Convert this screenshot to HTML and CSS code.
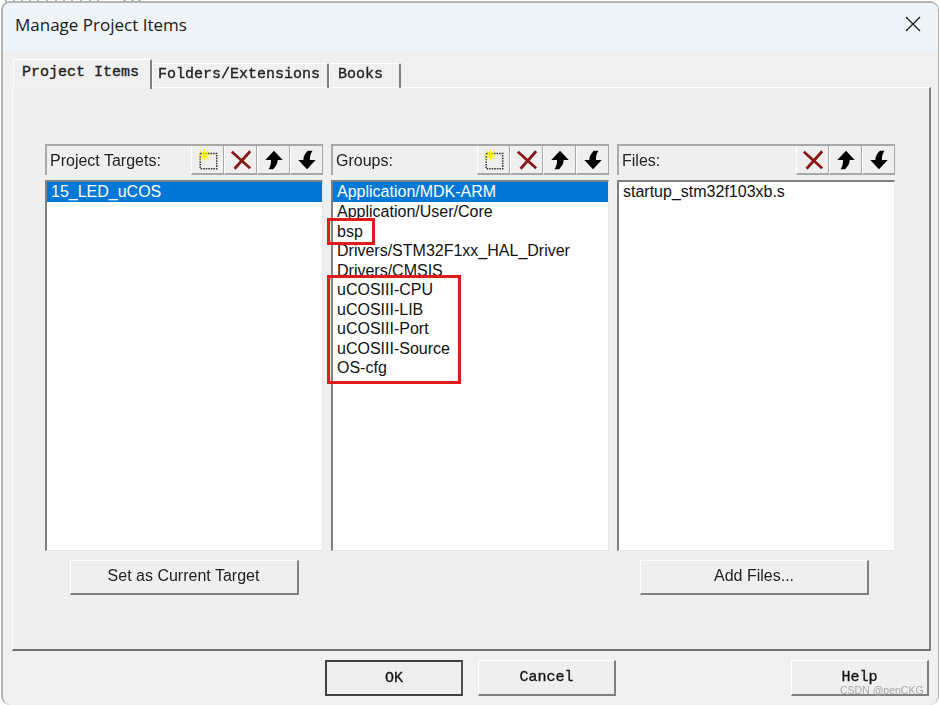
FILE: index.html
```html
<!doctype html>
<html lang="en">
	<head>
		<meta charset="UTF-8" />
		<meta name="viewport" content="width=device-width, initial-scale=1.0" />
		<title>Manage Project Items</title>
		<link rel="stylesheet" href="styles.css">
	</head>

	<body>
		<svg class="icon-defs" width="0" height="0">
			<symbol id="icon-new" viewBox="0 0 24 24">
				<rect x="3.500" y="5" width="18" height="16.500" fill="none" stroke="#333" stroke-width="1.600" stroke-dasharray="1.700 1.100" />
				<path d="M1.500 6.500H14M8 0V12.500M3.500 2L12.500 11M12.500 2L3.500 11" fill="none" stroke="#f7f300" stroke-width="1.300" />
			</symbol>
			<symbol id="icon-delete" viewBox="0 0 24 24">
				<path d="M2 3l20 18M22 2.500L5 21.500" fill="none" stroke="#8b1616" stroke-width="3" />
			</symbol>
			<symbol id="icon-up" viewBox="0 0 24 24">
				<path d="M12 2l9.500 10H16c0 4-2 7-5 10H6c2-2.500 2.800-6 2.800-10H2.500z" fill="#000" />
			</symbol>
			<symbol id="icon-down" viewBox="0 0 24 24">
				<path d="M12 22L2.500 12H8c0-4 2-7 5-10h5c-2 2.500-2.800 6-2.800 10h6.300z" fill="#000" />
			</symbol>
		</svg>

		<svg class="backdrop-marks" viewBox="0 0 160 4">
			<path d="M6 0v3M14 0v3M22 0v2M30 0v3M38 0v2M47 0v3M56 0v2M64 0v3M72 0v2M81 0v3M90 0v2M98 0v3M124 0l3 3M132 0l3 3M140 0l-3 3" fill="none" stroke="#6f9a4a" stroke-width="1.200" />
		</svg>

		<div class="window">
			<div class="titlebar">
				<span class="title">Manage Project Items</span>
				<svg class="close-icon" viewBox="0 0 16 16">
					<path d="M1 1l14 14M15 1L1 15" fill="none" stroke="#1a1a1a" stroke-width="1.300" />
				</svg>
			</div>

			<div class="dialog-body">
				<div class="tabs">
					<div class="tab active">Project Items</div>
					<div class="tab">Folders/Extensions</div>
					<div class="tab tab-books">Books</div>
				</div>

				<div class="tab-panel">
					<div class="columns">
						<div class="pane">
							<div class="pane-header">
								<span class="pane-label">Project Targets:</span>
								<div class="tool-btn"><svg><use href="#icon-new" /></svg></div>
								<div class="tool-btn"><svg><use href="#icon-delete" /></svg></div>
								<div class="tool-btn"><svg><use href="#icon-up" /></svg></div>
								<div class="tool-btn"><svg><use href="#icon-down" /></svg></div>
							</div>
							<div class="list">
								<div class="row selected">15_LED_uCOS</div>
							</div>
							<div class="pane-action">
								<div class="btn">Set as Current Target</div>
							</div>
						</div>

						<div class="pane">
							<div class="pane-header">
								<span class="pane-label">Groups:</span>
								<div class="tool-btn"><svg><use href="#icon-new" /></svg></div>
								<div class="tool-btn"><svg><use href="#icon-delete" /></svg></div>
								<div class="tool-btn"><svg><use href="#icon-up" /></svg></div>
								<div class="tool-btn"><svg><use href="#icon-down" /></svg></div>
							</div>
							<div class="list">
								<div class="row selected">Application/MDK-ARM</div>
								<div class="row">Application/User/Core</div>
								<div class="row">bsp</div>
								<div class="row">Drivers/STM32F1xx_HAL_Driver</div>
								<div class="row">Drivers/CMSIS</div>
								<div class="row">uCOSIII-CPU</div>
								<div class="row">uCOSIII-LIB</div>
								<div class="row">uCOSIII-Port</div>
								<div class="row">uCOSIII-Source</div>
								<div class="row">OS-cfg</div>
								<!-- annotations drawn over the list -->
								<div class="mark mark-bsp"></div>
								<div class="mark mark-ucos"></div>
							</div>
							<div class="pane-action"></div>
						</div>

						<div class="pane">
							<div class="pane-header">
								<span class="pane-label">Files:</span>
								<div class="tool-btn"><svg><use href="#icon-delete" /></svg></div>
								<div class="tool-btn"><svg><use href="#icon-up" /></svg></div>
								<div class="tool-btn"><svg><use href="#icon-down" /></svg></div>
							</div>
							<div class="list">
								<div class="row">startup_stm32f103xb.s</div>
							</div>
							<div class="pane-action">
								<div class="btn btn-add">Add Files...</div>
							</div>
						</div>
					</div>
				</div>

				<div class="footer">
					<div class="btn-mono default">OK</div>
					<div class="btn-mono">Cancel</div>
					<div class="btn-mono help">Help</div>
				</div>
			</div>
		</div>

		<div class="watermark">CSDN @penCKG</div>
	</body>
</html>
```

FILE: styles.css
```css
html,
body {
	margin: 0;
	height: 705px;
	overflow: hidden;
}

body {
	position: relative;
	background: #fff;
	font-family: "Liberation Sans", Arial, sans-serif;
	color: #111;
}

.icon-defs {
	position: absolute;
}

/* scrap of the editor behind the dialog */
.backdrop-marks {
	position: absolute;
	left: 0;
	top: 0;
	width: 160px;
	height: 4px;
}

.window {
	position: relative;
	box-sizing: border-box;
	width: 938px;
	height: 704px;
	margin: 1px 0 0 1px;
	background: #f0f0f0;
	border: 2px solid #b4b4b4;
	border-width: 2px 1px 0 2px;
	border-radius: 9px;
	overflow: hidden;
}

.titlebar {
	display: flex;
	align-items: center;
	justify-content: space-between;
	height: 42px;
	padding: 0 17px 6px 12px;
	background: #eef4f7;
}

.title {
	font: 17px "Open Sans", sans-serif;
	color: #1a1a1a;
}

.close-icon {
	width: 16px;
	height: 16px;
}

.dialog-body {
	padding: 0 7px 0 9px;
	filter: blur(0.35px);
}

/* tabs */
.tabs {
	display: flex;
	align-items: flex-end;
	height: 36px;
	padding-left: 1px;
	font: 15px "Liberation Mono", monospace;
	-webkit-text-stroke: 0.35px #222;
}

.tab {
	box-sizing: border-box;
	height: 25px;
	margin-bottom: -1px;
	padding: 2px 7px 0 5px;
	border-top: 1px solid #fff;
	border-left: 1px solid #fff;
	border-right: 2px solid #808080;
	border-radius: 2px 2px 0 0;
	white-space: nowrap;
	color: #222;
}

.tab.active {
	position: relative;
	z-index: 1;
	height: 30px;
	width: 139px;
	padding: 4px 0 0 8px;
	background: #f0f0f0;
	margin-bottom: -2px;
}

.tab-books {
	width: 72px;
	padding-left: 8px;
}

.tab-panel {
	box-sizing: border-box;
	height: 564px;
	padding: 56px 33px 0 32px;
	background: #efefef;
	border-top: 1px solid #fff;
	border-left: 1px solid #fff;
	border-right: 2px solid #808080;
	border-bottom: 2px solid #707070;
}

.columns {
	display: grid;
	grid-template-columns: 278px 278px 278px;
	column-gap: 8px;
}

/* list panes */
.pane-header {
	box-sizing: border-box;
	display: flex;
	align-items: stretch;
	height: 31px;
	border-top: 2px solid #a8a8a8;
	border-left: 2px solid #a8a8a8;
}

.pane-label {
	flex: 1;
	padding: 5px 0 0 3px;
	font-size: 16px;
	line-height: 20px;
	white-space: nowrap;
	color: #222;
}

.tool-btn {
	display: flex;
	align-items: center;
	justify-content: center;
	box-sizing: border-box;
	width: 33px;
	border-left: 1px solid #fff;
	border-right: 1px solid #a8a8a8;
	border-bottom: 2px solid #a8a8a8;
}

.tool-btn svg {
	width: 22px;
	height: 22px;
}

.list {
	position: relative;
	box-sizing: border-box;
	height: 371px;
	margin-top: 5px;
	background: #fff;
	border-top: 2px solid #808080;
	border-left: 2px solid #808080;
	border-right: 1px solid #e6e6e6;
	border-bottom: 1px solid #e6e6e6;
}

.row {
	height: 19.5px;
	padding-left: 4px;
	font-size: 16px;
	line-height: 20px;
	white-space: nowrap;
}

.row.selected {
	height: 20px;
	background: #0078d7;
	color: #fff;
}

.mark {
	position: absolute;
	box-sizing: border-box;
	border: 3px solid #e01b1b;
}

.mark-bsp {
	left: -6px;
	top: 36px;
	width: 48px;
	height: 27px;
}

.mark-ucos {
	left: -6px;
	top: 93px;
	width: 134px;
	height: 109px;
}

/* buttons */
.pane-action {
	display: flex;
	justify-content: center;
	padding-top: 9px;
}

.btn,
.btn-mono {
	box-sizing: border-box;
	text-align: center;
	background: #efefef;
	border-top: 1px solid #fff;
	border-left: 1px solid #fff;
	border-right: 2px solid #808080;
	border-bottom: 2px solid #808080;
}

.btn {
	width: 229px;
	height: 35px;
	font-size: 16px;
	line-height: 30px;
	color: #222;
}

.btn-add {
	margin-right: 3px;
}

.footer {
	display: flex;
	padding: 9px 0 0 313px;
	column-gap: 15px;
}

.btn-mono {
	width: 138px;
	height: 36px;
	font: 15px/33px "Liberation Mono", monospace;
	-webkit-text-stroke: 0.35px #222;
}

.btn-mono.default {
	border: 2px solid #404040;
	border-right-color: #505050;
}

.btn-mono.help {
	margin-left: 160px;
}

.watermark {
	position: absolute;
	left: 840px;
	top: 684px;
	font-size: 10.5px;
	color: #a8a8a8;
	white-space: nowrap;
}
```
